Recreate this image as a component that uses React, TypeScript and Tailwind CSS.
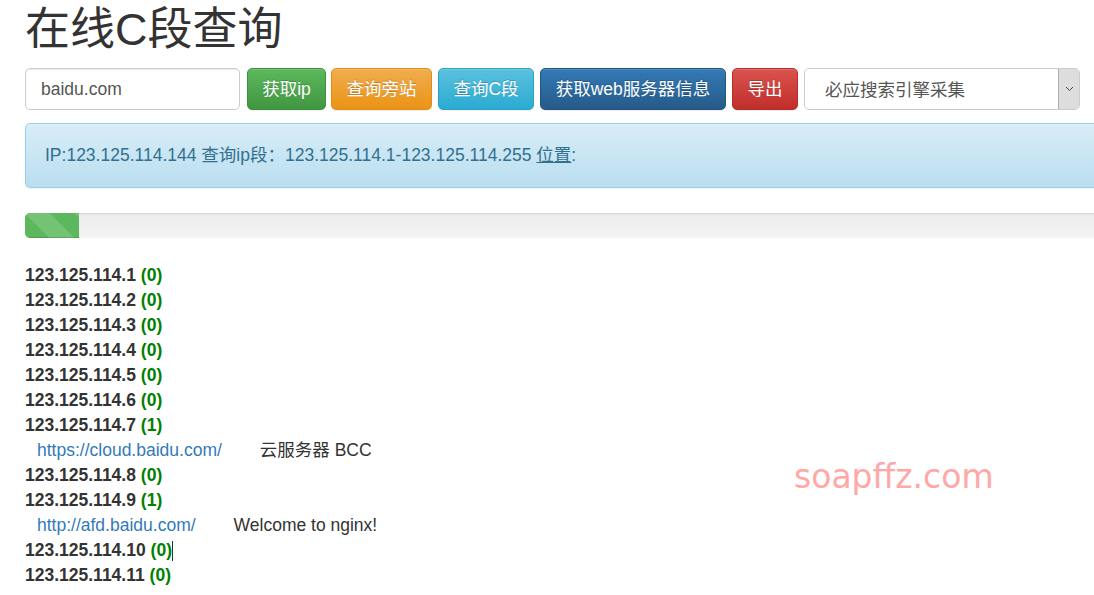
import React from "react";

const btnBase =
  "h-[42px] flex items-center justify-center rounded-[5px] border text-white text-[17.5px] shrink-0 [text-shadow:0_-1px_0_rgba(0,0,0,0.2)] shadow-[inset_0_1px_0_rgba(255,255,255,0.15),0_1px_1px_rgba(0,0,0,0.075)]";

type Row = { ip: string; n: number; link?: string; title?: string; cursor?: boolean };

const rows: Row[] = [
  { ip: "123.125.114.1", n: 0 },
  { ip: "123.125.114.2", n: 0 },
  { ip: "123.125.114.3", n: 0 },
  { ip: "123.125.114.4", n: 0 },
  { ip: "123.125.114.5", n: 0 },
  { ip: "123.125.114.6", n: 0 },
  { ip: "123.125.114.7", n: 1, link: "https://cloud.baidu.com/", title: "云服务器 BCC" },
  { ip: "123.125.114.8", n: 0 },
  { ip: "123.125.114.9", n: 1, link: "http://afd.baidu.com/", title: "Welcome to nginx!" },
  { ip: "123.125.114.10", n: 0, cursor: true },
  { ip: "123.125.114.11", n: 0 },
];

export default function App() {
  return (
    <div className="relative w-[1094px] h-[595px] overflow-hidden bg-white text-[#333] font-['Liberation_Sans','Noto_Sans_CJK_SC',sans-serif]">
      <div className="w-[1150px] pl-[25px]">
        <h1 className="pt-[5px] text-[45px] leading-[50px] font-normal text-[#333] mb-[13px]">在线C段查询</h1>

        <div className="flex items-center h-[42px]">
          <div className="w-[215px] h-[42px] shrink-0 rounded-[5px] border border-[#ccc] shadow-[inset_0_1px_1px_rgba(0,0,0,0.075)] flex items-center pl-[15px] text-[17.5px] text-[#555]">
            baidu.com
          </div>
          <div className={`${btnBase} ml-[7px] w-[79px] bg-[linear-gradient(to_bottom,#5cb85c,#419641)] border-[#3e8f3e]`}>获取ip</div>
          <div className={`${btnBase} ml-[5px] w-[101px] bg-[linear-gradient(to_bottom,#f0ad4e,#eb9316)] border-[#e38d13]`}>查询旁站</div>
          <div className={`${btnBase} ml-[6px] w-[96px] bg-[linear-gradient(to_bottom,#5bc0de,#2aabd2)] border-[#28a4c9]`}>查询C段</div>
          <div className={`${btnBase} ml-[6px] w-[186px] bg-[linear-gradient(to_bottom,#337ab7,#265a88)] border-[#245580]`}>获取web服务器信息</div>
          <div className={`${btnBase} ml-[6px] w-[66px] bg-[linear-gradient(to_bottom,#d9534f,#c12e2a)] border-[#b92c28]`}>导出</div>
          <div className="ml-[6px] w-[276px] h-[42px] shrink-0 rounded-[5px] border border-[#ccc] flex items-stretch overflow-hidden">
            <div className="flex-1 flex items-center pl-[20px] pt-[3px] text-[17.5px] text-[#555]">必应搜索引擎采集</div>
            <div className="w-[21px] bg-[#dddddd] border-l border-[#aaa] flex items-center justify-center">
              <svg width="9" height="6" viewBox="0 0 9 6" fill="none">
                <path d="M1 1 L4.5 4.5 L8 1" stroke="#444" strokeWidth="1" />
              </svg>
            </div>
          </div>
        </div>

        <div className="mt-[13px] h-[65px] rounded-[5px] border border-[#9acfea] bg-[linear-gradient(to_bottom,#d9edf7,#b9def0)] shadow-[inset_0_1px_0_rgba(255,255,255,0.25),0_1px_2px_rgba(0,0,0,0.05)] flex items-center pl-[19px] text-[17.5px] text-[#31708f]">
          <span>
            IP:123.125.114.144 查询ip段：123.125.114.1-123.125.114.255 <span className="underline">位置</span>:
          </span>
        </div>

        <div className="mt-[25px] h-[25px] rounded-[5px] overflow-hidden bg-[linear-gradient(to_bottom,#ebebeb,#f5f5f5)] shadow-[inset_0_1px_2px_rgba(0,0,0,0.1)] flex">
          <div className="w-[54px] h-full bg-[#5cb85c] bg-[linear-gradient(45deg,rgba(255,255,255,0.15)_25%,transparent_25%,transparent_50%,rgba(255,255,255,0.15)_50%,rgba(255,255,255,0.15)_75%,transparent_75%,transparent)] bg-[length:50px_50px] shadow-[inset_0_-1px_0_rgba(0,0,0,0.15)]" />
        </div>

        <div className="mt-[25px] text-[17.5px] leading-[25px]">
          {rows.map((r) => (
            <React.Fragment key={r.ip}>
              <div className="font-bold text-[#333] flex items-center">
                <span>
                  {r.ip} <span className="text-[#008000]">({r.n})</span>
                </span>
                {r.cursor && <span className="inline-block w-px h-[20px] bg-[#1a3a2a]" />}
              </div>
              {r.link && (
                <div className="pl-[12px] flex">
                  <span className="text-[#337ab7]">{r.link}</span>
                  <span className="ml-[38px] text-[#333]">{r.title}</span>
                </div>
              )}
            </React.Fragment>
          ))}
        </div>
      </div>

      <div className="absolute left-[794px] top-[455px] text-[33px] leading-[44px] text-[#ffa8a8] font-['DejaVu_Sans',sans-serif]">
        soapffz.com
      </div>
    </div>
  );
}
